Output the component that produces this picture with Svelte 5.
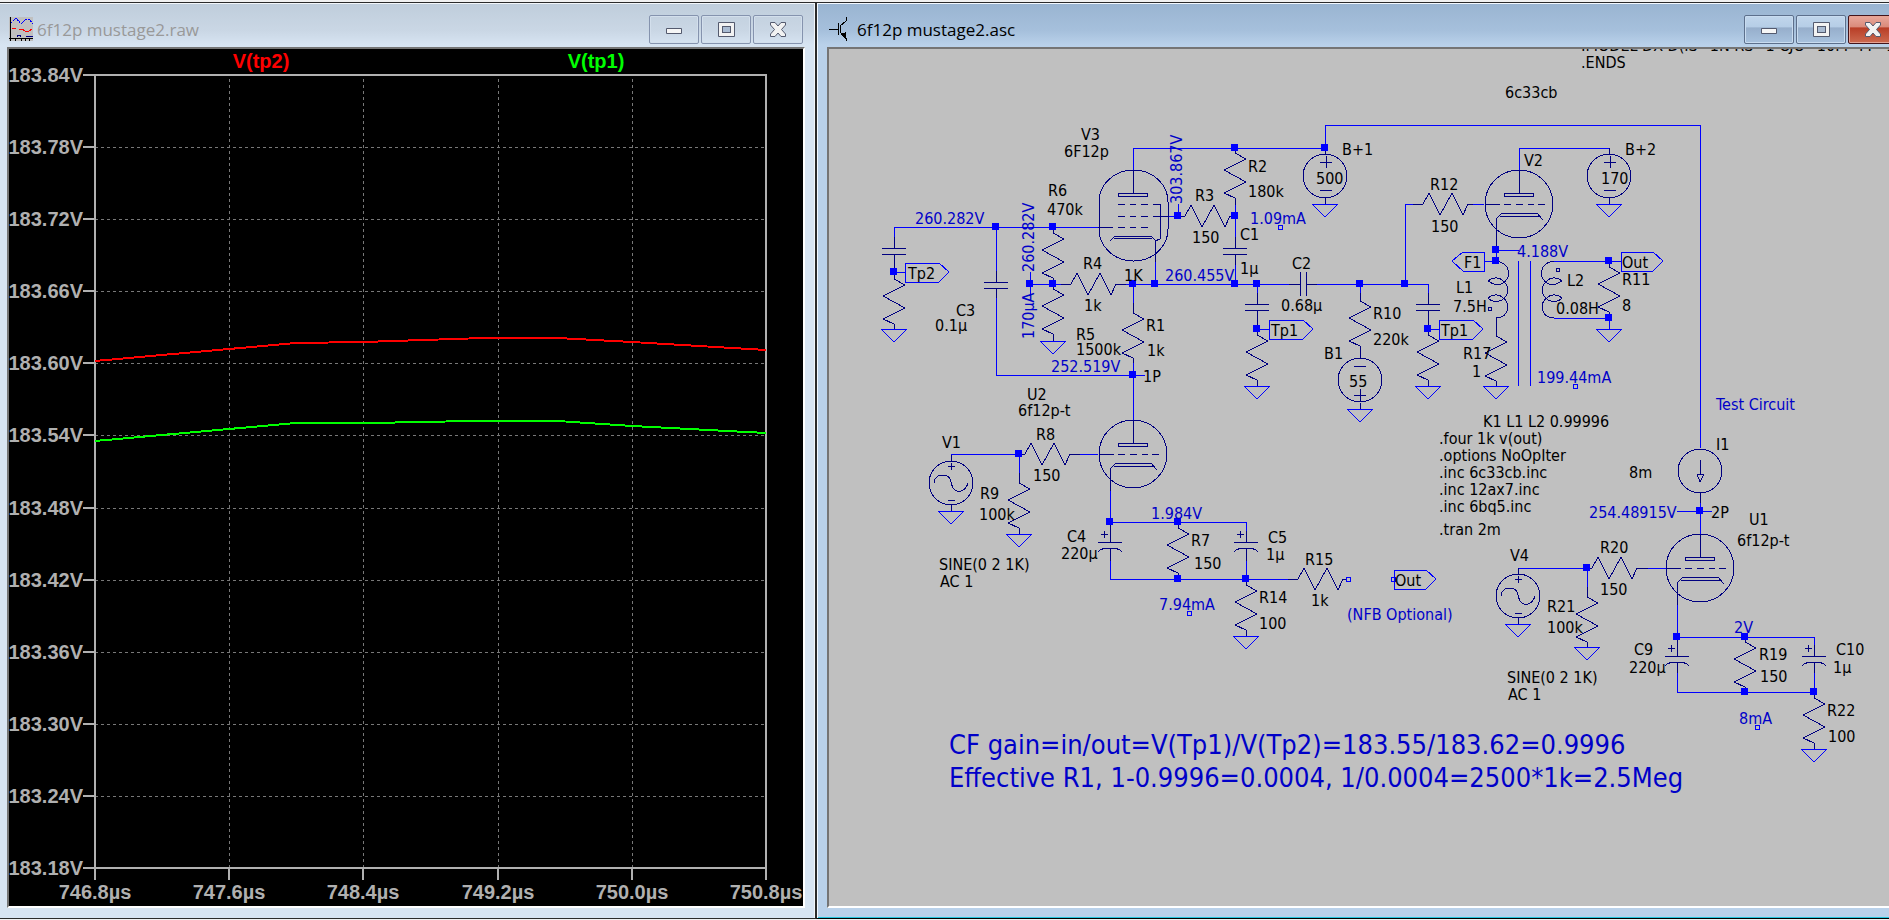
<script lang="ts">
	type Label = [x: number, y: number, text: string];
	type Point = [x: number, y: number];

	// ---- waveform pane ----
	const V_MAX = 183.84;
	const V_MIN = 183.18;
	const V_TICKS = Array.from({ length: 12 }, (_, i) => (V_MAX - i * 0.06).toFixed(2) + 'V');
	const T_TICKS = ['746.8µs', '747.6µs', '748.4µs', '749.2µs', '750.0µs', '750.8µs'];

	// points are [fraction of the time span, volts]
	const TRACES = [
		{
			name: 'V(tp2)',
			color: '#ff0000',
			points: [[0, 183.602], [0.3, 183.617], [0.4, 183.618], [0.58, 183.621], [0.69, 183.621], [0.8, 183.618], [1, 183.611]]
		},
		{
			name: 'V(tp1)',
			color: '#00ff00',
			points: [[0, 183.535], [0.3, 183.55], [0.41, 183.55], [0.56, 183.552], [0.69, 183.552], [0.8, 183.548], [1, 183.542]]
		}
	];

	let plotW = $state(794);
	let plotH = $state(857);

	const left = 86;
	const top = 26;
	let right = $derived(plotW - 37);
	let bottom = $derived(plotH - 38);

	function px(f: number) {
		return Math.round(left + f * (right - left));
	}

	function py(v: number) {
		return Math.round(top + ((V_MAX - v) / (V_MAX - V_MIN)) * (bottom - top));
	}

	// ---- schematic ----
	const WIRES = [
		'M893 226H1097 M893 226V236 M893 271H904',
		'M995 226V270 M995 297V374H1132',
		'M1029 283H1060 M1029 271V295 M1125 283H1288 M1316 283H1427V292',
		'M1132 283V302 M1132 362V419 M1132 374H1144',
		'M1132 169V147H1324 M1154 261V283 M1167 215H1177V203',
		'M1234 204V236 M1234 264V283 M1256 283V292 M1256 328H1268 M1427 328H1438',
		'M1324 147V124H1699V447 M1359 283V292 M1404 283V203H1412',
		'M1472 203H1483 M1518 169V147H1608 M1495 249H1518 M1495 239V260H1483',
		'M1553 260H1620 M1553 317H1608V328 M1517 260V385 M1529 260V385',
		'M950 453H1018V472 M1079 453H1097 M1109 490V521H1245V530',
		'M1109 560V578H1287 M1245 560V578',
		'M1517 567H1586V586 M1647 567H1665 M1676 510H1711 M1699 502V533',
		'M1676 604V636H1813V644 M1676 672V691H1813V672'
	];

	const JUNCTIONS: Point[] = [
		[893, 271], [995, 226], [1052, 226], [1029, 283], [1052, 283], [1132, 283], [1154, 283],
		[1132, 374], [1177, 215], [1234, 147], [1234, 215], [1324, 147], [1234, 283], [1256, 283],
		[1256, 328], [1359, 283], [1404, 283], [1427, 328], [1495, 249], [1495, 260], [1608, 260],
		[1608, 317], [1018, 453], [1109, 521], [1177, 521], [1177, 578], [1245, 578], [1699, 510],
		[1586, 567], [1676, 636], [1744, 636], [1744, 691], [1813, 691]
	];

	const OPEN_ENDS: Point[] = [[1279, 226], [1574, 385], [1188, 612], [1347, 578], [1392, 578], [1756, 726]];

	const GROUNDS: Point[] = [
		[893, 328], [1052, 340], [1256, 385], [1324, 203], [1359, 408], [1427, 385], [1495, 385],
		[1608, 203], [1608, 328], [950, 510], [1018, 533], [1245, 635], [1517, 623], [1586, 646], [1813, 748]
	];

	// x, start of the zigzag, start and end of its leads
	const RES_V = [
		[893, 278, 271, 328], [1052, 232, 226, 283], [1052, 288, 283, 340], [1132, 312, 302, 362],
		[1234, 152, 147, 204], [1256, 334, 328, 385], [1359, 300, 292, 357], [1427, 334, 328, 385],
		[1495, 335, 317, 385], [1608, 266, 260, 317], [1018, 482, 472, 533], [1177, 527, 521, 578],
		[1245, 584, 578, 635], [1586, 596, 586, 646], [1744, 641, 636, 691], [1813, 697, 691, 748]
	];
	const RES_H = [
		[1070, 283, 1060, 1125], [1184, 215, 1177, 1234], [1422, 203, 1412, 1472],
		[1024, 453, 1018, 1079], [1297, 578, 1287, 1345], [1591, 567, 1586, 1647]
	];

	// x, upper plate, lead ends
	const CAPS = [[893, 247, 236, 271], [995, 281, 270, 297], [1234, 247, 236, 264], [1256, 303, 292, 328], [1427, 303, 292, 328]];
	const POLAR_CAPS = [[1109, 541, 521, 560], [1245, 541, 530, 560], [1676, 655, 636, 672], [1813, 655, 644, 672]];

	const TRIODES = [[1518, 203, 249], [1132, 453, 490], [1699, 567, 604]];
	const SINES: Point[] = [[950, 482], [1517, 595]];

	const FLAGS = [[904, 271, 34], [1268, 328, 34], [1438, 328, 34], [1620, 260, 32], [1393, 578, 32]];

	const LABELS: Label[] = [
		[1580, 50, '.MODEL DX D(IS=1N RS=1 CJO=10PF TT=1N)'],
		[1580, 67, '.ENDS'], [1504, 97, '6c33cb'],
		[1080, 139, 'V3'], [1063, 156, '6F12p'], [1047, 195, 'R6'], [1046, 214, '470k'],
		[1082, 268, 'R4'], [1123, 280, '1K'], [1083, 310, '1k'], [907, 278, 'Tp2'],
		[955, 315, 'C3'], [934, 330, '0.1µ'], [1075, 339, 'R5'], [1075, 354, '1500k'],
		[1145, 330, 'R1'], [1146, 355, '1k'], [1142, 381, '1P'],
		[1247, 171, 'R2'], [1247, 196, '180k'], [1194, 200, 'R3'], [1191, 242, '150'],
		[1239, 239, 'C1'], [1239, 273, '1µ'], [1291, 268, 'C2'], [1280, 310, '0.68µ'],
		[1270, 335, 'Tp1'], [1323, 358, 'B1'], [1341, 154, 'B+1'], [1315, 183, '500'], [1348, 386, '55'],
		[1429, 189, 'R12'], [1430, 231, '150'], [1523, 165, 'V2'], [1463, 267, 'F1'],
		[1455, 292, 'L1'], [1452, 311, '7.5H'], [1372, 318, 'R10'], [1372, 344, '220k'],
		[1440, 335, 'Tp1'], [1462, 358, 'R17'], [1471, 376, '1'],
		[1600, 183, '170'], [1624, 154, 'B+2'], [1621, 267, 'Out'], [1621, 284, 'R11'], [1621, 310, '8'],
		[1566, 285, 'L2'], [1555, 313, '0.08H'],
		[1026, 399, 'U2'], [1017, 415, '6f12p-t'], [1035, 439, 'R8'], [1032, 480, '150'],
		[941, 447, 'V1'], [979, 498, 'R9'], [978, 519, '100k'], [1066, 541, 'C4'], [1060, 558, '220µ'],
		[1190, 545, 'R7'], [1193, 568, '150'], [938, 569, 'SINE(0 2 1K)'], [939, 586, 'AC 1'],
		[1482, 426, 'K1 L1 L2 0.99996'], [1438, 443, '.four 1k v(out)'], [1438, 460, '.options NoOpIter'],
		[1438, 477, '.inc 6c33cb.inc'], [1438, 494, '.inc 12ax7.inc'], [1438, 511, '.inc 6bq5.inc'],
		[1438, 534, '.tran 2m'], [1509, 560, 'V4'],
		[1267, 542, 'C5'], [1265, 559, '1µ'], [1304, 564, 'R15'], [1310, 605, '1k'], [1394, 585, 'Out'],
		[1258, 602, 'R14'], [1258, 628, '100'],
		[1715, 449, 'I1'], [1628, 477, '8m'], [1710, 517, '2P'], [1748, 524, 'U1'], [1736, 545, '6f12p-t'],
		[1599, 552, 'R20'], [1599, 594, '150'], [1546, 611, 'R21'], [1546, 632, '100k'],
		[1633, 654, 'C9'], [1628, 672, '220µ'], [1758, 659, 'R19'], [1759, 681, '150'],
		[1835, 654, 'C10'], [1832, 672, '1µ'], [1826, 715, 'R22'], [1827, 741, '100'],
		[1506, 682, 'SINE(0 2 1K)'], [1507, 699, 'AC 1']
	];

	const NOTES: Label[] = [
		[914, 223, '260.282V'], [1050, 371, '252.519V'], [1249, 223, '1.09mA'], [1164, 280, '260.455V'],
		[1516, 256, '4.188V'], [1536, 382, '199.44mA'], [1150, 518, '1.984V'], [1158, 609, '7.94mA'],
		[1346, 619, '(NFB Optional)'], [1715, 409, 'Test Circuit'], [1588, 517, '254.48915V'],
		[1733, 632, '2V'], [1738, 723, '8mA']
	];

	const UPRIGHT_NOTES: Label[] = [[1033, 271, '260.282V'], [1033, 338, '170µA'], [1181, 203, '303.867V']];

	const SUMMARY: Label[] = [
		[948, 753, 'CF gain=in/out=V(Tp1)/V(Tp2)=183.55/183.62=0.9996'],
		[948, 786, 'Effective R1, 1-0.9996=0.0004, 1/0.0004=2500*1k=2.5Meg']
	];
</script>

{#snippet controls()}
	<div class="controls">
		<button aria-label="Minimize">
			<svg width="18" height="18" viewBox="0 0 18 18">
				<rect x="1" y="7" width="16" height="6" rx="1" fill="#545a6e" />
				<rect x="2" y="8" width="14" height="4" fill="#f6f6f6" />
			</svg>
		</button>
		<button aria-label="Maximize">
			<svg width="18" height="18" viewBox="0 0 18 18">
				<rect x="1" y="1" width="17" height="15" rx="1" fill="#545a6e" />
				<path d="M2 2h15v13h-15z M5 5v7h9v-7z" fill="#f2f2f2" fill-rule="evenodd" />
				<path d="M6 6h7v5h-7z" fill="#a9bbd2" />
			</svg>
		</button>
		<button class="close" aria-label="Close">
			<svg width="18" height="18" viewBox="0 0 18 18">
				<path d="M1.5 1.5h4.500l3 3.500 3-3.500h4.500v2.500l-4 4.500 4 4.500v2.500h-4.500l-3-3.500-3 3.500h-4.500v-2.500l4-4.500-4-4.500z" fill="#f2f2f2" stroke="#545a6e" stroke-linejoin="round" />
			</svg>
		</button>
	</div>
{/snippet}

<main class="desktop">
	<section class="window inactive">
		<header class="titlebar">
			<svg class="app-icon" width="24" height="24" shape-rendering="crispEdges">
				<rect width="24" height="24" fill="#c0c0c0" />
				<path d="M2 6L7 1L12 7L17 2H20L24 7" fill="none" stroke="#0000ff" stroke-dasharray="2 1" />
				<path d="M3 11H7M10 12H13L16 14H20L23 12" fill="none" stroke="#ff0000" />
				<path d="M8 20V18H11V20M17 19H24" fill="none" stroke="#000080" />
				<path d="M1 0V24M0 21H24M6 21V24M12 21V24M16 21V24M20 21V24" fill="none" stroke="#000" />
			</svg>
			<h1>6f12p mustage2.raw</h1>
			{@render controls()}
		</header>

		<div class="client plot" bind:clientWidth={plotW} bind:clientHeight={plotH}>
			<svg width="100%" height="100%">
				<g class="grid">
					{#each V_TICKS.slice(1, -1) as label, i (label)}
						<path d="M{left} {py(V_MAX - (i + 1) * 0.06)}H{right}" />
					{/each}
					{#each [1, 2, 3, 4] as i (i)}
						<path d="M{px(i / 5)} {top + 4}V{bottom}" />
					{/each}
				</g>

				<g class="axis">
					<path d="M{left} {top}H{right}V{bottom}H{left}Z" />
					{#each V_TICKS as label, i (label)}
						{@const y = py(V_MAX - i * 0.06)}
						<path d="M{left - 12} {y}H{left}" />
						<text x={left - 12} y={y + 7} text-anchor="end">{label}</text>
					{/each}
					{#each T_TICKS as label, i (label)}
						<path d="M{px(i / 5)} {bottom}V{bottom + 12}" />
						<text x={px(i / 5)} y={bottom + 31} text-anchor="middle">{label}</text>
					{/each}
				</g>

				{#each TRACES as trace, i (trace.name)}
					<text x={px(0.25 + i / 2) - 2} y={top - 7} text-anchor="middle" fill={trace.color}>{trace.name}</text>
					<polyline
						class="trace"
						points={trace.points.map(([f, v]) => `${px(f)},${py(v)}`).join(' ')}
						stroke={trace.color}
					/>
				{/each}
			</svg>
		</div>
	</section>

	<section class="window active">
		<header class="titlebar">
			<svg class="app-icon" width="18" height="24" fill="none" stroke="#000" shape-rendering="crispEdges">
				<path d="M0 12H9M9 6V18M11 8V16M11 9L17 4V0M11 15L17 21V24" />
				<path d="M12 17L16 16L16 21Z" fill="#000" />
			</svg>
			<h1>6f12p mustage2.asc</h1>
			{@render controls()}
		</header>

		<div class="client schematic">
			<svg width="100%" height="100%">
				<g transform="translate(-828 -48)">
					<g class="wire">
						{#each WIRES as d (d)}
							<path {d} />
						{/each}
						{#each GROUNDS as [x, y]}
							<path d="M{x - 13} {y}h26l-13 13z" />
						{/each}
						{#each FLAGS as [x, y, w]}
							<path d="M{x} {y - 9}h{w}l10 9l-10 10h-{w}z" />
						{/each}
						<path d="M1483 251h-21l-11 9l11 10h21z" />
						{#each OPEN_ENDS as [x, y]}
							<rect x={x - 2} y={y - 2} width="4" height="4" />
						{/each}
					</g>

					<g class="symbol">
						{#each RES_V as [x, y, from, to]}
							<path d="M{x} {from}V{y}l11 6l-22 11l22 12l-22 11l11 5V{to}" />
						{/each}
						{#each RES_H as [x, y, from, to]}
							<path d="M{from} {y}H{x}l6 -11l11 22l12 -22l11 22l5 -11H{to}" />
						{/each}
						{#each CAPS as [x, y, from, to]}
							<path d="M{x} {from}V{y}M{x - 12} {y}h24M{x - 12} {y + 6}h24M{x} {y + 6}V{to}" />
						{/each}
						<path d="M1288 283H1299M1299 271v24M1305 271v24M1305 283H1316" />
						{#each POLAR_CAPS as [x, y, from, to]}
							<path d="M{x} {from}V{y}M{x - 12} {y}h24M{x - 12} {y + 10}q3 -4 12 -4t12 4M{x} {y + 6}V{to}" />
							<path d="M{x - 9} {y - 8}h7M{x - 6} {y - 11}v7" />
						{/each}

						{#each TRIODES as [x, y, cathode]}
							<circle cx={x} cy={y} r="34" />
							<rect x={x - 15} y={y - 11} width="29" height="3" />
							<path d="M{x} {y - 34}v23M{x - 34} {y}h15M{x - 15} {y}h7m5 0h7m5 0h6m4 0h7" />
							<path d="M{x - 23} {cathode}V{y + 15}l6 -6h35l6 7M{x - 19} {y + 12}h40" />
						{/each}

						<!-- pentode V3 -->
						<rect x="1098" y="169" width="69" height="91" rx="34" ry="32" />
						<rect x="1117" y="192" width="29" height="3" />
						<path d="M1132 169V192M1117 203h7m5 0h6m5 0h7M1117 215h7m5 0h6m5 0h7M1117 226h7m5 0h6m5 0h7" />
						<path d="M1097 226H1112M1152 215H1167M1152 203H1159V238L1154 240V261" />
						<path d="M1109 240L1114 235H1150L1155 240M1113 237H1151" />

						<!-- DC sources -->
						<circle cx="1324" cy="175" r="22" />
						<path d="M1324 147v6M1324 197v6M1319 161h12M1325 155v12M1319 189h12" />
						<circle cx="1608" cy="175" r="22" />
						<path d="M1608 147v6M1608 197v6M1603 161h12M1609 155v12M1603 189h12" />
						<circle cx="1359" cy="379" r="22" />
						<path d="M1359 402v6M1353 365h12M1353 394h12M1359 388v12" />

						{#each SINES as [x, y]}
							<circle cx={x} cy={y} r="22" />
							<path d="M{x} {y - 28}v6M{x} {y + 22}v6M{x - 3} {y - 17}h7M{x} {y - 20}v7M{x - 3} {y + 17}h7" />
							<path d="M{x - 17} {y}c0 -4 3 -8 8 -8c10 0 8 7 11 13c3 5 12 5 15 -5" />
						{/each}

						<!-- current source I1 -->
						<circle cx="1699" cy="470" r="22" />
						<path d="M1699 492V502M1699 459V473M1696 473h7l-4 8z" />

						<!-- L1 and L2, wound towards each other -->
						<path id="coil" d="M1495 260C1511 262 1511 279 1500 283C1495 285 1490 282 1487 280C1491 276 1498 276 1501 279C1509 285 1509 293 1501 299C1495 302 1490 300 1487 297C1491 293 1498 293 1501 296C1510 302 1509 316 1495 317" />
						<use href="#coil" transform="translate(3048 0) scale(-1 1)" />
						<circle cx="1489" cy="308" r="2" />
						<circle cx="1557" cy="269" r="2" />
					</g>

					<g class="junction">
						{#each JUNCTIONS as [x, y]}
							<rect x={x - 4} y={y - 4} width="7" height="7" />
						{/each}
					</g>

					{#each LABELS as [x, y, text]}
						<text {x} {y}>{text}</text>
					{/each}
					{#each NOTES as [x, y, text]}
						<text class="note" {x} {y}>{text}</text>
					{/each}
					{#each UPRIGHT_NOTES as [x, y, text]}
						<text class="note" transform="translate({x} {y}) rotate(-90)">{text}</text>
					{/each}
					{#each SUMMARY as [x, y, text]}
						<text class="note summary" {x} {y}>{text}</text>
					{/each}
				</g>
			</svg>
		</div>
	</section>
</main>

<style>
	:global(body) {
		margin: 0;
		background: #f0f0f0;
		overflow: hidden;
	}

	/* the schematic window runs a little past the right edge of the screen */
	.desktop {
		display: grid;
		grid-template-columns: minmax(0, 816fr) minmax(0, 1095fr);
		width: calc(100% + 22px);
		height: 100vh;
		padding: 2px 0 1px;
		box-sizing: border-box;
	}

	.window {
		display: flex;
		flex-direction: column;
		box-sizing: border-box;
		min-height: 0;
		padding: 1px 10px 10px;
		border: 1px solid #2b2b2b;
	}

	.inactive {
		padding-left: 7px;
		border-left: none;
		background: linear-gradient(#bfcddb, #cad7e5 28px, #d7e4f2 42px);
		box-shadow: inset -1px 1px #f2f6fa;
	}

	.active {
		border-bottom-color: #000;
		background: linear-gradient(#99b4d1, #a6c0dc 28px, #b9d1ea 42px);
		box-shadow: inset 1px 1px #f2f8ff, inset 0 -1px #25c5dd;
	}

	.titlebar {
		display: flex;
		align-items: center;
		flex: none;
		height: 43px;
	}

	.app-icon {
		flex: none;
		margin: 6px 0 0 2px;
	}

	h1 {
		flex: 1;
		margin: 8px 0 0 4px;
		font: 400 17px/24px 'Open Sans', 'Noto Sans', sans-serif;
		color: #000;
		white-space: nowrap;
	}

	.active h1 { margin-left: 10px; }
	.inactive h1 { color: #999; }

	.controls {
		display: flex;
		align-self: flex-start;
		gap: 2px;
		padding: 11px 2px 0 0;
	}

	button {
		display: grid;
		place-items: center;
		width: 50px;
		height: 29px;
		padding: 0;
		border: 1px solid #8593ae;
		border-radius: 2px;
		background: transparent;
		box-shadow: inset 0 0 0 1px #d3dfec;
	}

	.active button {
		border-color: #5d708c;
		background: linear-gradient(#c1d6ec, #b5cde6 42%, #96aecb 43%, #a8c2de);
		box-shadow: inset 0 0 0 1px #c9dcf0;
	}

	.active .close {
		border-color: #43141b;
		background: linear-gradient(#e9a89c, #d98979 42%, #b83d26 43%, #cc6a50);
		box-shadow: inset 0 0 0 1px #e6a394;
	}

	.client {
		flex: 1;
		min-height: 0;
		overflow: hidden;
		border: 2px solid;
		border-color: #757575 #fff #fff #757575;
	}

	svg { display: block; }

	.plot {
		background: #000;
		font: bold 20px 'Liberation Sans', Arial, sans-serif;
	}

	.grid path {
		stroke: #787878;
		stroke-dasharray: 3 3;
		shape-rendering: crispEdges;
	}

	.axis path {
		fill: none;
		stroke: #b0b0b0;
		stroke-width: 2;
		shape-rendering: crispEdges;
	}

	.axis text { fill: #b0b0b0; }

	.trace {
		fill: none;
		stroke-width: 2;
		shape-rendering: crispEdges;
	}

	.schematic {
		background: #c0c0c0;
		font: 16px 'DejaVu Sans Condensed', 'Noto Sans', sans-serif;
	}

	.wire,
	.symbol {
		fill: none;
		shape-rendering: crispEdges;
	}

	.wire { stroke: #0000ff; }
	.symbol { stroke: #000080; }

	.junction {
		fill: #0000ff;
		shape-rendering: crispEdges;
	}

	.note { fill: #0000c8; }
	.summary { font-size: 27px; }
</style>
